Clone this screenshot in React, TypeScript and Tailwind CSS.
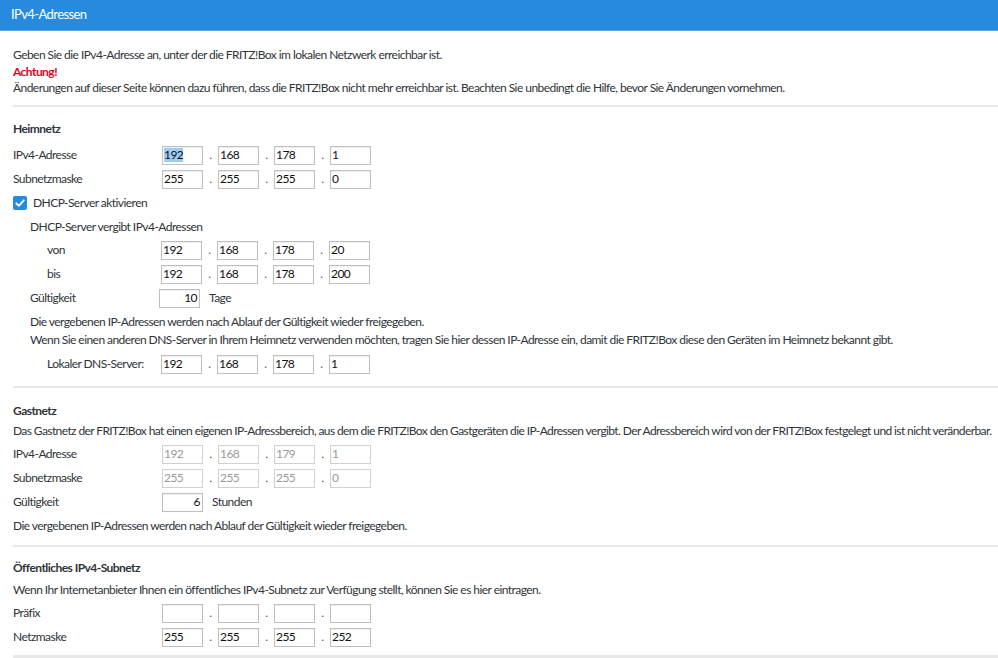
const font = { fontFamily: "Lato, 'Liberation Sans', sans-serif" };

function IpBox({ value, disabled, selected, align }: { value: string; disabled?: boolean; selected?: boolean; align?: "right" }) {
  return (
    <div
      className={
        "flex h-[19px] w-[41px] items-center border px-px text-[12px] leading-none " +
        (disabled ? "border-[#d0d0d0] text-[#999]" : "border-[#bfbfbf] text-[#111] shadow-[inset_0_1px_1px_rgba(0,0,0,0.07)]") +
        (align === "right" ? " justify-end pr-[2px]" : "")
      }
    >
      {selected ? <span className="bg-[#9dccf2] py-px">{value}</span> : value}
    </div>
  );
}

function IpInputs({ parts, disabled, selectFirst }: { parts: string[]; disabled?: boolean; selectFirst?: boolean }) {
  return (
    <div className="flex items-center">
      {parts.map((p, i) => (
        <div key={i} className="flex items-center">
          {i > 0 && <span className="w-[15px] text-center text-[#555]">.</span>}
          <IpBox value={p} disabled={disabled} selected={selectFirst && i === 0} />
        </div>
      ))}
    </div>
  );
}

function Row({ label, labelClass, children, h = "h-6" }: { label: string; labelClass: string; children?: React.ReactNode; h?: string }) {
  return (
    <div className={"flex items-center " + h}>
      <div className={"shrink-0 whitespace-nowrap " + labelClass}>{label}</div>
      {children}
    </div>
  );
}

export default function App() {
  return (
    <div style={font} className="min-h-[658px] bg-white text-[12px] tracking-[-0.55px] text-[#2f3439]">
      <div className="flex h-[31px] items-center border-b border-[#5fa8e8] bg-[#268bde] px-[11px] text-[13px] tracking-[-0.6px] text-white">
        IPv4-Adressen
      </div>

      <div className="pl-[13px]">
        <div className="pt-[15px] pb-[9px] leading-[18px]">
          <p>Geben Sie die IPv4-Adresse an, unter der die FRITZ!Box im lokalen Netzwerk erreichbar ist.</p>
          <p className="font-bold leading-[16px] text-[#e2001a]">Achtung!</p>
          <p className="leading-[16px]">
            Änderungen auf dieser Seite können dazu führen, dass die FRITZ!Box nicht mehr erreichbar ist. Beachten Sie unbedingt die Hilfe, bevor Sie Änderungen vornehmen.
          </p>
        </div>

        <section className="border-t-2 border-[#e8e8e8] pt-[13px] pb-[10px]">
          <h2 className="font-bold leading-[18px]">Heimnetz</h2>
          <div className="mt-[5px]">
            <Row label="IPv4-Adresse" labelClass="w-[149px]">
              <IpInputs parts={["192", "168", "178", "1"]} selectFirst />
            </Row>
            <Row label="Subnetzmaske" labelClass="w-[149px]">
              <IpInputs parts={["255", "255", "255", "0"]} />
            </Row>
            <div className="flex h-6 items-center gap-[6px]">
              <span className="flex h-[14px] w-[14px] items-center justify-center rounded-[2px] bg-[#268bde]">
                <svg viewBox="0 0 14 14" className="h-[14px] w-[14px]" fill="none" stroke="white" strokeWidth="1.8" strokeLinecap="round" strokeLinejoin="round">
                  <path d="M3.3 7.3 L5.8 9.8 L10.8 4.3" />
                </svg>
              </span>
              <span>DHCP-Server aktivieren</span>
            </div>
            <div className="pl-[17px]">
              <Row label="DHCP-Server vergibt IPv4-Adressen" labelClass="" h="h-[23px]" />
              <Row label="von" labelClass="w-[131px] pl-[17px]">
                <IpInputs parts={["192", "168", "178", "20"]} />
              </Row>
              <Row label="bis" labelClass="w-[131px] pl-[17px]">
                <IpInputs parts={["192", "168", "178", "200"]} />
              </Row>
              <Row label="Gültigkeit" labelClass="w-[129px]">
                <IpBox value="10" align="right" />
                <span className="ml-[9px]">Tage</span>
              </Row>
              <div className="mt-[3px] leading-[18px]">
                <p>Die vergebenen IP-Adressen werden nach Ablauf der Gültigkeit wieder freigegeben.</p>
                <p>
                  Wenn Sie einen anderen DNS-Server in Ihrem Heimnetz verwenden möchten, tragen Sie hier dessen IP-Adresse ein, damit die FRITZ!Box diese den Geräten im Heimnetz bekannt gibt.
                </p>
              </div>
              <div className="mt-[3px]">
                <Row label="Lokaler DNS-Server:" labelClass="w-[131px] pl-[17px]">
                  <IpInputs parts={["192", "168", "178", "1"]} />
                </Row>
              </div>
            </div>
          </div>
        </section>

        <section className="border-t-2 border-[#e8e8e8] pt-[14px] pb-[10px]">
          <h2 className="font-bold leading-[18px]">Gastnetz</h2>
          <p className="mt-[2px] whitespace-nowrap leading-[18px] tracking-[-0.6px]">
            Das Gastnetz der FRITZ!Box hat einen eigenen IP-Adressbereich, aus dem die FRITZ!Box den Gastgeräten die IP-Adressen vergibt. Der Adressbereich wird von der FRITZ!Box festgelegt und ist nicht veränderbar.
          </p>
          <div className="mt-[2px]">
            <Row label="IPv4-Adresse" labelClass="w-[149px]">
              <IpInputs parts={["192", "168", "179", "1"]} disabled />
            </Row>
            <Row label="Subnetzmaske" labelClass="w-[149px]">
              <IpInputs parts={["255", "255", "255", "0"]} disabled />
            </Row>
            <Row label="Gültigkeit" labelClass="w-[149px]">
              <IpBox value="6" align="right" />
              <span className="ml-[9px]">Stunden</span>
            </Row>
          </div>
          <p className="mt-[3px] leading-[18px]">Die vergebenen IP-Adressen werden nach Ablauf der Gültigkeit wieder freigegeben.</p>
        </section>

        <section className="border-t-2 border-[#e8e8e8] pt-[12px] pb-[6px]">
          <h2 className="font-bold leading-[18px]">Öffentliches IPv4-Subnetz</h2>
          <p className="mt-[4px] leading-[18px]">
            Wenn Ihr Internetanbieter Ihnen ein öffentliches IPv4-Subnetz zur Verfügung stellt, können Sie es hier eintragen.
          </p>
          <div className="mt-[2px]">
            <Row label="Präfix" labelClass="w-[149px]">
              <IpInputs parts={["", "", "", ""]} />
            </Row>
            <Row label="Netzmaske" labelClass="w-[149px]">
              <IpInputs parts={["255", "255", "255", "252"]} />
            </Row>
          </div>
        </section>
        <div className="h-[3px] bg-[#e8e8e8]" />
      </div>
    </div>
  );
}
